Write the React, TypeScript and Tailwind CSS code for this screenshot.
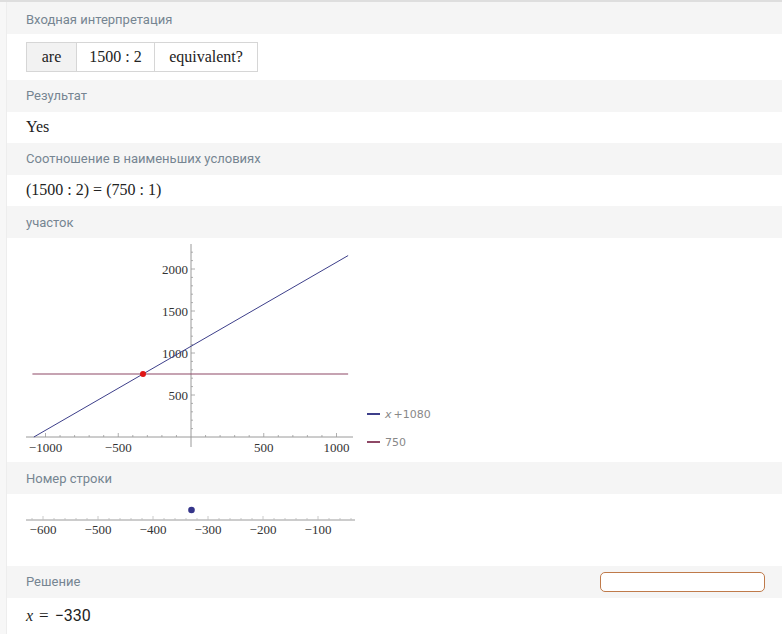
const serif = { fontFamily: '"Liberation Serif", "DejaVu Serif", serif' }

function Header({ title, className = '', children }: { title: string; className?: string; children?: React.ReactNode }) {
  return (
    <div className={`h-[32px] bg-[#f5f5f5] flex items-center justify-between pl-[19px] pr-[17px] ${className}`}>
      <span className="text-[13px] text-[#768592] font-['Roboto',sans-serif]">{title}</span>
      {children}
    </div>
  )
}

function Plot() {
  const X = (v: number) => 184 + v * 0.1455
  const Y = (v: number) => 199 - v * 0.084
  const xTicks: number[] = []
  for (let v = -1000; v <= 1000; v += 100) if (v !== 0) xTicks.push(v)
  const yTicks: number[] = []
  for (let v = 100; v <= 2200; v += 100) yTicks.push(v)

  return (
    <svg width="440" height="224" viewBox="0 0 440 224" className="block">
      {/* axes */}
      <line x1="19" y1="199" x2="346" y2="199" stroke="#9a9a9a" strokeWidth="1" />
      <line x1="184" y1="6" x2="184" y2="209" stroke="#9a9a9a" strokeWidth="1" />
      {xTicks.map((v) => (
        <line key={v} x1={X(v)} y1={199} x2={X(v)} y2={v % 500 === 0 ? 195 : 197} stroke="#9a9a9a" strokeWidth="0.8" />
      ))}
      {yTicks.map((v) => (
        <line key={v} x1={184} y1={Y(v)} x2={v % 500 === 0 ? 188 : 186} y2={Y(v)} stroke="#9a9a9a" strokeWidth="0.8" />
      ))}
      {[-1000, -500, 500, 1000].map((v) => (
        <text key={v} x={X(v)} y={214} textAnchor="middle" fontSize="13" fill="#333" style={serif}>
          {v < 0 ? `\u2212${-v}` : v}
        </text>
      ))}
      {[500, 1000, 1500, 2000].map((v) => (
        <text key={v} x={181} y={Y(v) + 4.5} textAnchor="end" fontSize="13" fill="#333" style={serif}>
          {v}
        </text>
      ))}
      {/* curves */}
      <line x1={X(-1080)} y1={Y(0)} x2={X(1080)} y2={Y(2160)} stroke="#3d3f8a" strokeWidth="1" />
      <line x1={X(-1090)} y1={Y(750)} x2={X(1080)} y2={Y(750)} stroke="#8e4866" strokeWidth="1.2" />
      <circle cx={X(-330)} cy={Y(750)} r="3" fill="#e01515" />
      {/* legend */}
      <line x1="360" y1="176" x2="373" y2="176" stroke="#3d3f8a" strokeWidth="2" />
      <text x="378" y="180" fontSize="11" fill="#888" style={{ fontFamily: '"DejaVu Sans", sans-serif' }}>
        <tspan fontStyle="italic">x</tspan>
        <tspan dx="2">+1080</tspan>
      </text>
      <line x1="360" y1="204" x2="373" y2="204" stroke="#8e4866" strokeWidth="2" />
      <text x="378" y="208" fontSize="11" fill="#888" style={{ fontFamily: '"DejaVu Sans", sans-serif' }}>
        750
      </text>
    </svg>
  )
}

function NumberLine() {
  const X = (v: number) => 201 + (v + 300) * 0.55
  const ticks: number[] = []
  for (let v = -620; v <= -40; v += 20) ticks.push(v)
  return (
    <svg width="440" height="72" viewBox="0 0 440 72" className="block">
      <line x1="19" y1="26" x2="348" y2="26" stroke="#9a9a9a" strokeWidth="1" />
      {ticks.map((v) => (
        <line key={v} x1={X(v)} y1={26} x2={X(v)} y2={v % 100 === 0 ? 22 : 24} stroke="#bdbdbd" strokeWidth="0.8" />
      ))}
      {[-600, -500, -400, -300, -200, -100].map((v) => (
        <text key={v} x={X(v)} y={39.5} textAnchor="middle" fontSize="13" fill="#333" style={serif}>
          {`\u2212${-v}`}
        </text>
      ))}
      <circle cx={X(-330)} cy={16} r="3.3" fill="#35358a" />
    </svg>
  )
}

export default function App() {
  return (
    <div className="w-[782px] h-[634px] overflow-hidden bg-white flex border-t-2 border-[#dedede]">
      <div className="w-[7px] shrink-0 bg-[#f7f7f7] border-r border-[#ededed]" />
      <div className="flex-1 flex flex-col">
        <Header title="Входная интерпретация" className="pt-[4px]" />
        <div className="h-[46px] flex items-center pl-[19px]">
          <div className="flex h-[30px] border border-[#d6d6d6] text-[16px] text-[#222]" style={serif}>
            <div className="w-[50px] bg-[#f2f2f2] flex items-center justify-center border-r border-[#d6d6d6]">are</div>
            <div className="w-[78px] flex items-center justify-center border-r border-[#d6d6d6]">1500 : 2</div>
            <div className="w-[102px] flex items-center justify-center">equivalent?</div>
          </div>
        </div>

        <Header title="Результат" />
        <div className="h-[31px] flex items-center pl-[19px] text-[16px] text-[#222]" style={serif}>
          Yes
        </div>

        <Header title="Соотношение в наименьших условиях" />
        <div className="h-[32px] flex items-center pl-[19px] text-[16px] text-[#222]" style={serif}>
          (1500 : 2) = (750 : 1)
        </div>

        <Header title="участок" />
        <div className="h-[224px]">
          <Plot />
        </div>

        <Header title="Номер строки" />
        <div className="h-[72px]">
          <NumberLine />
        </div>

        <Header title="Решение">
          <div className="w-[165px] h-[20px] rounded-[5px] border border-[#bf7a4a] bg-white" />
        </Header>
        <div className="h-[36px] flex items-center pl-[19px] text-[16px] text-[#222]">
          <span className="italic" style={serif}>x</span>
          <span className="ml-[6px] text-[17px]" style={serif}>=</span>
          <span className="ml-[6px] font-['Roboto',sans-serif]">{'\u2212'}330</span>
        </div>
      </div>
    </div>
  )
}
